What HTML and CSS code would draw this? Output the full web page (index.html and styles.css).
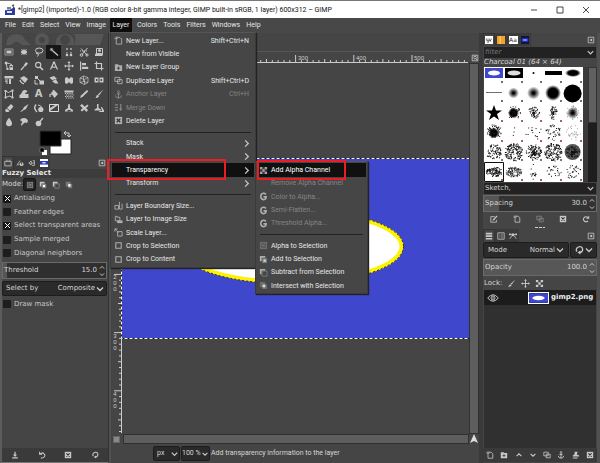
FILE: index.html
```html
<!DOCTYPE html>
<html lang="en">
<head>
<meta charset="utf-8">
<title>GIMP</title>
<link rel="stylesheet" href="styles.css">
</head>
<body>
<svg class="defs" aria-hidden="true">
  <symbol id="rect" viewBox="0 0 10 10"><path d="M1 2h8v6H1z" fill="none" stroke="#aaa" stroke-width=".8"/><path d="M2.5 3.5h5v3h-5z"/></symbol>
  <symbol id="ell" viewBox="0 0 10 10"><ellipse cx="5" cy="5" rx="3" ry="2"/><path d="M2 2.5h6M2 7.5h6" stroke="#aaa" stroke-width=".7" stroke-dasharray="1.5 .7"/></symbol>
  <symbol id="lasso" viewBox="0 0 10 10"><ellipse cx="5.2" cy="3.6" rx="3.8" ry="2.6" class="s"/><path d="M2.5 5.5Q1.5 7.5 4 6.5Q5 8 3.5 9.5" class="s"/></symbol>
  <symbol id="wand" viewBox="0 0 10 10"><path d="M3.4 3.6L9 8.6" class="s" stroke-width="1.3"/><path d="M2.5.8v3.4M.8 2.5h3.4M1.2 1.2l2.6 2.6M3.8 1.2L1.2 3.8" class="s" stroke-width=".6"/></symbol>
  <symbol id="bycolor" viewBox="0 0 10 10"><path d="M2 1h2v2H2zM6 1h2v2H6zM2 5h1.500v1.500H2zM6 5h2v1.500H6z" opacity=".6"/><circle cx="3" cy="8" r="1.300"/><circle cx="7" cy="8" r="1.300"/></symbol>
  <symbol id="scissors" viewBox="0 0 10 10"><path d="M2 1.500L8 8M8.500 1L3 7.500" class="s"/><circle cx="2.500" cy="8" r="1.300" class="s"/><circle cx="8" cy="8" r="1.100" class="s"/><path d="M1 4h7" class="s" stroke-dasharray="1 1"/></symbol>
  <symbol id="fgsel" viewBox="0 0 10 10"><path d="M2.500 1.500h6v6h-6z" class="s"/><circle cx="5.500" cy="3.500" r="1.500"/><path d="M1 9V7.500Q1 6 3 6h4q1.500 0 1.500 1.500V9z"/></symbol>
  <symbol id="path" viewBox="0 0 10 10"><path d="M2 2L3.500 8.500M2 2q4 0 6 2" class="s"/><path d="M.8.8h2.400v2.400H.8zM2.500 7h2v2h-2zM5.500 4h3.500v5H5.500z"/><path d="M6.300 5h2v1.300h-2z" fill="#454545"/></symbol>
  <symbol id="picker" viewBox="0 0 10 10"><path d="M7 1l2 1.500-2.500 3-1.700-1.300z"/><path d="M5.500 4.800L2 9" class="s" stroke-width="1.300"/></symbol>
  <symbol id="zoomt" viewBox="0 0 10 10"><circle cx="4.200" cy="4" r="2.600" class="s" stroke-width="1.100"/><path d="M6 6l3 3" class="s" stroke-width="1.700"/></symbol>
  <symbol id="measure" viewBox="0 0 10 10"><path d="M5 1L1.500 8.500M5 1l3.500 7.500M3 5.500q2 1.500 4 0" class="s" stroke-width="1.200"/><circle cx="5" cy="1.700" r="1.200"/></symbol>
  <symbol id="move" viewBox="0 0 10 10"><path d="M5 1v8M1 5h8" class="s"/><path d="M5 0l1.500 2h-3zM5 10L3.500 8h3zM0 5l2-1.500v3zM10 5L8 3.500v3z"/></symbol>
  <symbol id="align" viewBox="0 0 10 10"><path d="M1 .5h1.200v9H1zM3 2h4v2.200H3zM3 5.800h6.200V8H3z"/></symbol>
  <symbol id="crop" viewBox="0 0 10 10"><path d="M2.500.5v7h7M.5 2.500h7v7" class="s" stroke-width="1.200"/></symbol>
  <symbol id="unified" viewBox="0 0 10 10"><path d="M.5 1h9v2.500h-9zM5 4h2v5H5z"/><path d="M1 5h3M1 7l2-1v3" class="s"/></symbol>
  <symbol id="rotate" viewBox="0 0 10 10"><path d="M1 3l4-2 4 3-3 4z"/><path d="M1 5q.5 3 4 4" class="s" stroke-width="1.300"/></symbol>
  <symbol id="scale" viewBox="0 0 10 10"><path d="M1 1h3v3H1zM5.500 5.500H10V9.500H5.500z"/><path d="M3.500 3.500L6 6M1 5v4h3" class="s"/></symbol>
  <symbol id="shear" viewBox="0 0 10 10"><path d="M.5 2.500L5 1l3 3-5 1zM3 6l4-1.500 2.500 4H6z"/></symbol>
  <symbol id="flip" viewBox="0 0 10 10"><path d="M1 8V3l2-1 2 2 2-2 2 1v5l-2 1-2-2-2 2z"/></symbol>
  <symbol id="cube" viewBox="0 0 10 10"><path d="M1 3l3.500-2L9 2.500v5L5.500 9.500 1 7.500zM1 3l4.500 1.500L9 2.500M5.500 4.500v5M4.500 1v5.500L1 7.500M4.500 6.500L9 7.500" class="s" stroke-width=".7"/></symbol>
  <symbol id="flip2" viewBox="0 0 10 10"><path d="M.5 2.500h4v5h-4zM5.500 2.500h4v5h-4z"/><path d="M2 5h2M6 5h2M2.500 4v2M7.500 4v2" stroke="#454545" stroke-width=".9"/></symbol>
  <symbol id="cage" viewBox="0 0 10 10"><path d="M1.500 2l3 1.500L8.500 1.500v7L5.500 7l-4 1.500z" class="s"/><path d="M.5 1h2v2h-2zM7.500.5h2v2h-2zM.5 7.500h2v2h-2zM7.500 7.500h2v2h-2z"/></symbol>
  <symbol id="warp" viewBox="0 0 10 10"><path d="M.5 9V6q2-.5 2.500-3Q4 .5 6.500 1 9 2 8 3.500 6 2.500 6.300 5H9.500v4z"/></symbol>
  <symbol id="bucket" viewBox="0 0 10 10"><path d="M2 4l3-3 4 4-3.500 4z"/><path d="M3 5L1 5.500V8M4 1l2 3" class="s" stroke-width="1.200"/></symbol>
  <symbol id="grad" viewBox="0 0 10 10"><path d="M.5 1.500h9v2h-9z"/><path d="M1 4.500h8M2 6h8M1 7.500h8M2 9h8" class="s" stroke-dasharray="1.200 1"/></symbol>
  <symbol id="pencil" viewBox="0 0 10 10"><path d="M8 1l1.300 1.300L3.500 8 1 9l1-2.500z"/></symbol>
  <symbol id="brush" viewBox="0 0 10 10"><path d="M9.500.5L5 6.500 3.800 5.500z"/><path d="M4 6l1 1q-.5 2-4 2 1.300-.6 1.200-1.600Q2.400 6 4 6z"/></symbol>
  <symbol id="eraser" viewBox="0 0 10 10"><path d="M3 5l4-4 2.500 2.500L6 7.500zM2.500 5.500l3 2.500-1 1H2L1 7.500z"/></symbol>
  <symbol id="air" viewBox="0 0 10 10"><path d="M9.500 1L7 6 3 8l2-4zM1 9l2.500-2.500L4 8z"/></symbol>
  <symbol id="ink" viewBox="0 0 10 10"><path d="M2 1.500q-3 4 1 7.500" class="s" stroke-width="1.400"/><circle cx="6.800" cy="6.500" r="2.600"/><path d="M4 2q3 0 4 3" class="s"/></symbol>
  <symbol id="mypaint" viewBox="0 0 10 10"><path d="M.5 1.500h9v7h-9z" fill="none" stroke="#ddd"/><path d="M9 2L1 8V5l5-3z"/></symbol>
  <symbol id="stamp" viewBox="0 0 10 10"><path d="M4 1.500Q5 .5 6 1.500V5l3 2v1.500H1V7l3-2z"/><path d="M3.500 7h3v1.500h-3z" fill="#454545"/></symbol>
  <symbol id="heal" viewBox="0 0 10 10"><path d="M1 2.500L3 1l6 6-1.500 2zM8.500 1.500L9.500 3 3 8.500 1.500 7z"/></symbol>
  <symbol id="stamp2" viewBox="0 0 10 10"><path d="M3 1h1.500v4L7 6.500v1H.5v-1L3 5zM7 4h1l2 3.500v1.500H5.500L5 8h3z"/></symbol>
  <symbol id="drop" viewBox="0 0 10 10"><path d="M5 .8Q8 4.500 8 6.500 8 9.300 5 9.300T2 6.500Q2 4.500 5 .8z"/></symbol>
  <symbol id="smudge" viewBox="0 0 10 10"><path d="M1 3Q2 1 5 1t4 3L8 6 6 5.500 4 7 2.500 9 2 7l1.500-2z"/></symbol>
  <symbol id="dodge" viewBox="0 0 10 10"><circle cx="4.500" cy="6.500" r="2.800"/><path d="M5.500 5L9 1" class="s" stroke-width="1.300"/></symbol>
  <symbol id="new" viewBox="0 0 10 10"><path d="M3.500 1.500h3l2 2v5.500H2.500V4.500" class="s"/><path d="M2.500.5v4M.5 2.500h4" class="s"/></symbol>
  <symbol id="group" viewBox="0 0 10 10"><path d="M1 1.500h3.500l1 1H9V9H1z"/><path d="M5 4v3.500M3.200 5.700h3.600" stroke="#454545" stroke-width="1.100"/></symbol>
  <symbol id="dup" viewBox="0 0 10 10"><path d="M1 1.500h5.500V6H1zM4 4h5v4.500H4z" class="s"/></symbol>
  <symbol id="anchor" viewBox="0 0 10 10"><circle cx="5" cy="1.700" r="1" class="s"/><path d="M5 2.700V9M3 4.300h4M1.500 6q.5 3 3.500 3t3.500-3" class="s" stroke-width="1.100"/></symbol>
  <symbol id="merge" viewBox="0 0 10 10"><path d="M1 2h3.500M1 5h3.500M1 8h3.500M7.500 1v6" class="s" stroke-width="1.300"/><path d="M5.500 6h4l-2 3z"/></symbol>
  <symbol id="del" viewBox="0 0 10 10"><path d="M1 1h8v8H1z"/><path d="M3 3l4 4M7 3L3 7" stroke="#333" stroke-width="1.400"/></symbol>
  <symbol id="bound" viewBox="0 0 10 10"><path d="M1 5h4v4H1zM6 1v8H9V3" class="s"/></symbol>
  <symbol id="toimg" viewBox="0 0 10 10"><path d="M1.500 1.500v5h5v-4h-3v-1z" class="s"/><path d="M3.500 6h6v3h-6z"/></symbol>
  <symbol id="sc" viewBox="0 0 10 10"><path d="M4 4h5v5H4z" class="s"/><path d="M1 4V1h3M1 1l4 4" class="s"/></symbol>
  <symbol id="cr" viewBox="0 0 10 10"><path d="M2 2h6v6H2z" class="s" stroke-width="1.200"/></symbol>
  <symbol id="chk" viewBox="0 0 10 10"><path d="M1 1h8v8H1z" fill="#444"/><path d="M1 1h2.700v2.700H1zM6.300 1H9v2.700H6.300zM3.700 3.700h2.600v2.600H3.700zM1 6.300h2.700V9H1zM6.300 6.300H9V9H6.300z"/></symbol>
  <symbol id="g" viewBox="0 0 10 10"><path d="M7.700 2.700Q6.500 1.300 4.800 1.500 2 2 2 5t3 3.500Q8 8.500 8 5.400H5" class="s" stroke-width="1.700"/></symbol>
  <symbol id="rep" viewBox="0 0 10 10"><path d="M1 1h8v8H1z" fill="#777"/><path d="M3 3h4v4H3z" fill="none" stroke="#333" stroke-dasharray="1 1"/></symbol>
  <symbol id="add" viewBox="0 0 10 10"><path d="M1 1h6v2H3v4H1z"/><path d="M3.500 3.500H9V9H3.500z" fill="#888"/><path d="M5 5h2.500v2.500H5z" fill="#fff"/></symbol>
  <symbol id="sub" viewBox="0 0 10 10"><path d="M1 1h6v2H3v4H1z"/><path d="M3.500 3.500H9V9H3.500z" fill="none" stroke="#888"/></symbol>
  <symbol id="int" viewBox="0 0 10 10"><path d="M1 1h6v6H1zM3.500 3.500H9V9H3.500z" fill="#777"/><path d="M4 4h3v3H4z" fill="#fff"/></symbol>
  <symbol id="dn" viewBox="0 0 10 10"><path d="M2 3.500l3 3 3-3" class="s" stroke-width="1.400"/></symbol>
  <symbol id="up" viewBox="0 0 10 10"><path d="M2 6.500l3-3 3 3" class="s" stroke-width="1.400"/></symbol>
  <symbol id="rt" viewBox="0 0 10 10"><path d="M3.500 1.500L7 5 3.500 8.500" class="s" stroke-width="1.400"/></symbol>
  <symbol id="tabmenu" viewBox="0 0 10 10"><path d="M1.500 1.500h7v7h-7z" class="s"/><path d="M6.500 3v4L3 5z"/></symbol>
  <symbol id="save" viewBox="0 0 10 10"><path d="M5 1v5M1.500 8.500h7" class="s" stroke-width="1.500"/><path d="M2.500 4.500h5L5 7.500z"/></symbol>
  <symbol id="undo" viewBox="0 0 10 10"><path d="M2 1v3h3M2.300 4Q5 1 7.500 3.500T7 8Q5.500 9.300 3.500 8.500" class="s" stroke-width="1.300"/></symbol>
  <symbol id="reset" viewBox="0 0 10 10"><path d="M3 6.500Q1.500 5 3 3q2-2 4.500-1Q9.500 4 8 6.500q-1 1-3 1" class="s" stroke-width="1.300"/><path d="M6.500 5.500v4l-3-2z"/></symbol>
  <symbol id="refresh" viewBox="0 0 10 10"><path d="M7.500 7.500Q5 9.500 2.800 7.500T3 2.800Q5 1.300 7.500 3" class="s" stroke-width="1.300"/><path d="M9 .8v4H5z"/></symbol>
  <symbol id="edit" viewBox="0 0 10 10"><path d="M6 2H1v7h7V6" class="s"/><path d="M8.500.5l1 1L5 6.500l-2 .8.700-2z"/></symbol>
  <symbol id="tool" viewBox="0 0 10 10"><path d="M1 3h8v5.500H1zM2.500 1.500h2M6 1.500h2" class="s"/></symbol>
  <symbol id="dev" viewBox="0 0 10 10"><path d="M1 8l4-6M3 8l1-2" class="s"/><circle cx="7" cy="6.500" r="2.300"/><path d="M7 4v3" stroke="#333"/></symbol>
  <symbol id="hist" viewBox="0 0 10 10"><path d="M1 5l3-2.500v5zM4 5h4V2H6M8 5v3H5" class="s"/></symbol>
  <symbol id="layers" viewBox="0 0 10 10"><path d="M1 1h8v2H1zM1 4.200h8v2H1zM1 7.400h8v2H1z"/></symbol>
  <symbol id="chan" viewBox="0 0 10 10"><path d="M1 1h8v8H1z" class="s"/><path d="M3.500 2v6M5.500 2v6M7 2v6" class="s" stroke-width=".8" opacity=".6"/></symbol>
  <symbol id="paths" viewBox="0 0 10 10"><path d="M1 8.500Q5 0 9 8.500M1 3h8" class="s"/><path d="M3.500 2h3v3h-3zM0 2h2v2H0zM8 2h2v2H8z"/></symbol>
  <symbol id="eye" viewBox="0 0 12 10"><path d="M.7 5Q6-1.500 11.300 5 6 11.500.7 5z" class="s"/><circle cx="6" cy="5" r="2" class="s"/><circle cx="6" cy="5" r=".8"/></symbol>
  <symbol id="mask" viewBox="0 0 10 10"><path d="M3.500 1h3.500l-1 3.500 3 1V7H1V5.500l2-1zM1 8h6v1.300H1z"/></symbol>
  <symbol id="gimp" viewBox="0 0 20 10"><path d="M0 0h20v10H0z" fill="#3f48cc"/><ellipse cx="10" cy="5" rx="6.500" ry="2.400" fill="#fff"/></symbol>
</svg>

<div class="window">
  <header class="title">
    <svg class="logo" viewBox="0 0 12 12" aria-hidden="true"><path d="M1 6q2 1 3-1l1 1 4-2V2l2 2v7H1z" fill="#2d3c9e"/><path d="M3 4h4M8 2l2-1" stroke="#555" stroke-width="1.500"/><path d="M3 7h5v2H3z" fill="#dfe4ff"/></svg>
    <h1>*[gimp2] (imported)-1.0 (RGB color 8-bit gamma integer, GIMP built-in sRGB, 1 layer) 600x312 – GIMP</h1>
    <div class="wbtns">
      <button aria-label="Minimize"><svg viewBox="0 0 10 10"><path d="M2 5h6" stroke="#333" stroke-width=".9"/></svg></button>
      <button aria-label="Maximize"><svg viewBox="0 0 10 10"><path d="M2 2h6v6H2z" fill="none" stroke="#333" stroke-width=".9"/></svg></button>
      <button aria-label="Close"><svg viewBox="0 0 10 10"><path d="M2 2l6 6M8 2L2 8" stroke="#333" stroke-width=".9"/></svg></button>
    </div>
  </header>
  <nav class="menubar">
    <div class="first"><button>File</button><button>Edit</button><button>Select</button><button>View</button><button>Image</button></div>
    <div class="drop">
      <button class="open">Layer</button>
      <div class="menu main">
        <button><svg><use href="#new"/></svg><span>New Layer...</span><kbd>Shift+Ctrl+N</kbd></button>
        <button><i></i><span>New from Visible</span></button>
        <button><svg><use href="#group"/></svg><span>New Layer Group</span></button>
        <button><svg><use href="#dup"/></svg><span>Duplicate Layer</span><kbd>Shift+Ctrl+D</kbd></button>
        <button disabled><svg><use href="#anchor"/></svg><span>Anchor Layer</span><kbd>Ctrl+H</kbd></button>
        <button disabled><svg><use href="#merge"/></svg><span>Merge Down</span></button>
        <button><svg><use href="#del"/></svg><span>Delete Layer</span></button>
        <hr>
        <button><i></i><span>Stack</span><svg class="arr"><use href="#rt"/></svg></button>
        <button><i></i><span>Mask</span><svg class="arr"><use href="#rt"/></svg></button>
        <div class="sub">
          <button class="on"><i></i><span>Transparency</span><svg class="arr"><use href="#rt"/></svg></button>
          <div class="mark m1"></div>
          <div class="menu child">
            <div class="sub"><button class="on"><svg><use href="#chk"/></svg><span>Add Alpha Channel</span></button><div class="mark m2"></div></div>
            <button disabled><i></i><span>Remove Alpha Channel</span></button>
            <button disabled class="br"><svg><use href="#g"/></svg><span>Color to Alpha...</span></button>
            <button disabled class="br"><svg><use href="#g"/></svg><span>Semi-Flatten...</span></button>
            <button disabled class="br"><svg><use href="#g"/></svg><span>Threshold Alpha...</span></button>
            <hr>
            <button><svg><use href="#rep"/></svg><span>Alpha to Selection</span></button>
            <button><svg><use href="#add"/></svg><span>Add to Selection</span></button>
            <button><svg><use href="#sub"/></svg><span>Subtract from Selection</span></button>
            <button><svg><use href="#int"/></svg><span>Intersect with Selection</span></button>
          </div>
        </div>
        <button><i></i><span>Transform</span><svg class="arr"><use href="#rt"/></svg></button>
        <hr>
        <button><svg><use href="#bound"/></svg><span>Layer Boundary Size...</span></button>
        <button><svg><use href="#toimg"/></svg><span>Layer to Image Size</span></button>
        <button><svg><use href="#sc"/></svg><span>Scale Layer...</span></button>
        <button><svg><use href="#cr"/></svg><span>Crop to Selection</span></button>
        <button><svg><use href="#cr"/></svg><span>Crop to Content</span></button>
      </div>
    </div>
    <button>Colors</button><button>Tools</button><button>Filters</button><button>Windows</button><button>Help</button>
  </nav>

  <main>
    <aside class="left">
      <svg class="wilber" viewBox="0 0 104 12" aria-hidden="true"><g fill="#565656"><path d="M4 12Q5 1 14 1q7 0 9 6l6 5h-9q-6-7-11 0z"/><circle cx="40" cy="7" r="7"/><path d="M54 12q-1-11 9-11 10 0 9 11z"/><path d="M72 1h30l-4 11H72q3-6 0-11z"/></g><circle cx="40" cy="7" r="3" fill="#454545"/><circle cx="63" cy="7" r="5" fill="#454545"/></svg>
      <div class="tools" id="tools"></div>
      <svg class="swatch" viewBox="0 0 34 26" role="img" aria-label="Foreground and background colors"><path d="M11 9h21v15H11z" fill="#fff" stroke="#222"/><path d="M1 1h21v15H1z" fill="#000" stroke="#333"/><path d="M26 3h4v4M27 1l-2 2 2 2M28 5l2 2 2-2" fill="none" stroke="#ccc"/><path d="M3 20h5v5H3z" fill="#fff"/><path d="M1 18h4v4H1z" fill="#000" stroke="#999" stroke-width=".5"/></svg>
      <div class="tabs">
        <button class="cur" aria-label="Tool options"><svg><use href="#tool"/></svg></button><button aria-label="Device status"><svg><use href="#dev"/></svg></button><button aria-label="Undo history"><svg><use href="#hist"/></svg></button><button aria-label="Images"><svg viewBox="0 0 10 10"><path d="M0 0h10v10H0z" fill="#fff"/><path d="M0 2.500h10v4.500H0z" fill="#2a35c0"/><path d="M3 4h4v1.500H3z" fill="#fff"/></svg></button><button class="end" aria-label="Configure tab"><svg><use href="#tabmenu"/></svg></button>
      </div>
      <h2>Fuzzy Select</h2>
      <div class="mode"><span>Mode:</span>
        <button class="cur" aria-label="Replace"><svg><use href="#rep"/></svg></button><button aria-label="Add"><svg><use href="#add"/></svg></button><button aria-label="Subtract"><svg><use href="#sub"/></svg></button><button aria-label="Intersect"><svg><use href="#int"/></svg></button></div>
      <div class="checks five-rows">
        <label><input type="checkbox" checked>Antialiasing</label>
        <label><input type="checkbox">Feather edges</label>
        <label><input type="checkbox" checked>Select transparent areas</label>
        <label><input type="checkbox">Sample merged</label>
        <label><input type="checkbox">Diagonal neighbors</label>
      </div>
      <div class="spin thr"><label for="thr">Threshold</label><input id="thr" value="15.0"><span class="step"><svg><use href="#up"/></svg><svg><use href="#dn"/></svg></span></div>
      <div class="combo"><label for="by">Select by</label><select id="by"><option>Composite</option></select><svg><use href="#dn"/></svg></div>
      <div class="checks"><label><input type="checkbox">Draw mask</label></div>
      <footer class="bar"><button aria-label="Save"><svg><use href="#save"/></svg></button><button aria-label="Restore"><svg><use href="#undo"/></svg></button><button aria-label="Delete"><svg><use href="#del"/></svg></button><button aria-label="Reset"><svg><use href="#reset"/></svg></button></footer>
    </aside>

    <section class="view">
      <div class="gap"></div>
      <div class="stage">
        <div></div>
        <svg class="hr" id="hruler" role="img" aria-label="Horizontal ruler"></svg>
        <svg class="corner" viewBox="0 0 10 10" aria-hidden="true"><path d="M1.500 1.500h7v7h-7z" fill="none" stroke="#ccc"/><circle cx="5" cy="4.500" r="1.700" fill="none" stroke="#ccc"/><path d="M6 6l2 2" stroke="#ccc"/></svg>
        <svg class="vr" id="vruler" role="img" aria-label="Vertical ruler"></svg>
        <div class="canvas">
          <svg viewBox="0 0 349 181" role="img" aria-label="gimp2.png canvas"><path d="M0 0h349v181H0z" fill="#3f48cc"/><ellipse cx="169.500" cy="88.500" rx="111" ry="35.500" fill="#fff" stroke="#fff200" stroke-width="4"/><g fill="none"><ellipse cx="169.500" cy="88.500" rx="113" ry="37.500" stroke="#222" stroke-dasharray="2 2"/><path d="M.5.5h348v180H.5z" stroke="#111"/><path d="M.5.5h348v180H.5z" stroke="#fff" stroke-dasharray="3 2"/></g></svg>
        </div>
        <div class="vs"></div>
        <div class="qm"><b></b></div>
        <div class="hs"></div>
        <svg class="nav" viewBox="0 0 10 10" aria-hidden="true"><path d="M5 0l4 9-4-2-4 2z" fill="#ddd"/></svg>
      </div>
      <div class="status">
        <div class="combo"><select aria-label="Unit"><option>px</option></select><svg><use href="#dn"/></svg></div>
        <div class="combo pct"><input aria-label="Zoom" value="100 %"><svg><use href="#dn"/></svg></div>
        <output>Add transparency information to the layer</output>
      </div>
    </section>

    <aside class="right">
      <div class="tabs top">
        <button class="cur" aria-label="Brushes"><svg viewBox="0 0 10 10"><path d="M0 0h10v10H0z" fill="#fff"/><path d="M1 4h8M2 6h6M3 8h2M2 5l2 2 2-2 2 2" stroke="#333" fill="none" stroke-dasharray="1.500 .5"/></svg></button><button aria-label="Patterns"><svg viewBox="0 0 10 10"><path d="M0 0h10v10H0z" fill="#f5a12c"/><path d="M3 0h2v10H3z" fill="#fcc56b"/></svg></button><button class="aa" aria-label="Fonts"><span>Aa</span></button><button aria-label="History"><svg viewBox="0 0 10 10"><path d="M0 0h10v10H0z" fill="#0f1540"/><path d="M1 3h8v4H1z" fill="#2a45e0"/><path d="M3 4.500h4v1H3z" fill="#fff"/></svg></button><button class="end" aria-label="Configure tab"><svg><use href="#tabmenu"/></svg></button>
      </div>
      <div class="filter"><input aria-label="Filter" placeholder="filter"><svg><use href="#dn"/></svg></div>
      <p class="bname">Charcoal 01 (64 × 64)</p>
      <div class="brushbox"><svg id="brushes" viewBox="0 0 99 115" role="img" aria-label="Brushes"></svg><div class="track"><b></b></div></div>
      <div class="filter tag"><input aria-label="Tags" value="Sketch,"><svg><use href="#dn"/></svg></div>
      <div class="spin spc"><label for="spc">Spacing</label><input id="spc" value="30.0"><span class="step"><svg><use href="#up"/></svg><svg><use href="#dn"/></svg></span></div>
      <div class="bar five"><button aria-label="Edit"><svg><use href="#edit"/></svg></button><button aria-label="New"><svg><use href="#new"/></svg></button><button disabled aria-label="Duplicate"><svg><use href="#dup"/></svg></button><button aria-label="Delete"><svg><use href="#del"/></svg></button><button aria-label="Refresh"><svg><use href="#refresh"/></svg></button></div>
      <div class="grip"></div>
      <div class="tabs low"><button class="cur" aria-label="Layers"><svg><use href="#layers"/></svg></button><button aria-label="Channels"><svg><use href="#chan"/></svg></button><button aria-label="Paths"><svg><use href="#paths"/></svg></button><button class="end" aria-label="Configure tab"><svg><use href="#tabmenu"/></svg></button></div>
      <div class="modes">
        <div class="combo"><label for="md">Mode</label><select id="md"><option>Normal</option></select><svg><use href="#dn"/></svg></div>
        <button class="combo sw" aria-label="Switch mode group"><svg><use href="#reset"/></svg><svg><use href="#dn"/></svg></button>
      </div>
      <div class="spin opa"><label for="opa">Opacity</label><input id="opa" value="100.0"><span class="step"><svg><use href="#up"/></svg><svg><use href="#dn"/></svg></span></div>
      <div class="lock"><span>Lock:</span><button aria-label="Lock pixels"><svg><use href="#brush"/></svg></button><button aria-label="Lock position"><svg><use href="#move"/></svg></button><button aria-label="Lock alpha"><svg><use href="#chk"/></svg></button></div>
      <div class="list"><div class="layer"><svg class="eye"><use href="#eye"/></svg><svg class="thumb"><use href="#gimp"/></svg><strong>gimp2.png</strong></div></div>
      <footer class="bar eight"><button aria-label="New layer"><svg><use href="#new"/></svg></button><button aria-label="New group"><svg><use href="#group"/></svg></button><button aria-label="Raise"><svg><use href="#up"/></svg></button><button aria-label="Lower"><svg><use href="#dn"/></svg></button><button aria-label="Duplicate"><svg><use href="#dup"/></svg></button><button aria-label="Anchor"><svg><use href="#anchor"/></svg></button><button aria-label="Mask"><svg><use href="#mask"/></svg></button><button aria-label="Delete"><svg><use href="#del"/></svg></button></footer>
    </aside>
  </main>
</div>
<script src="app.js"></script>
</body>
</html>
```
FILE: app.js
```js
// Toolbox buttons, in row order.
const toolNames = ("rect ell lasso wand bycolor scissors fgsel path picker zoomt measure move align crop " +
  "unified rotate scale shear flip cube flip2 cage warp text bucket grad pencil brush " +
  "eraser air ink mypaint stamp heal stamp2 drop smudge dodge").split(" ");
document.getElementById("tools").innerHTML = toolNames.map(n =>
  `<button aria-label="${n}"${n === "wand" ? ' class="cur"' : ""}>` +
  (n === "text" ? "<b>A</b>" : `<svg><use href="#${n}"/></svg>`) + "</button>").join("");

// Rulers: one tick for every 10 image pixels at 58.2 % zoom.
const step = 5.82;
function ruler(id, from, to, origin, firstLabel, vertical) {
  let out = "";
  for (let k = -40; k < 90; k++) {
    const p = origin + k * step;
    if (p < from || p > to) continue;
    const len = k % 10 === 0 ? 8 : k % 5 === 0 ? 4 : 3;
    const r = p.toFixed(1);
    out += vertical ? `<path d="M11 ${r}h-${len}"/>` : `<path d="M${r} 11v-${len}"/>`;
    if (k % 10 === 0 && k >= firstLabel) {
      const label = String(k * 10);
      out += vertical
        ? [...label].map((c, i) => `<text x="4" y="${Math.round(p + 5 + i * 6)}">${c}</text>`).join("")
        : `<text x="${Math.round(p) + 2}" y="8">${label}</text>`;
    }
  }
  out += vertical ? `<path d="M10.500 0V${to}"/>` : `<path d="M0 10.500H${to}"/>`;
  document.getElementById(id).innerHTML = out;
}
ruler("hruler", 0, 347, 0, 30, false);
ruler("vruler", 0, 370, 95, 20, true);

// Brush grid: solid, soft and speckled brushes.
let seed = 7;
const rnd = () => (seed = (seed * 16807) % 2147483647) / 2147483647;
const cx = c => 9.8 + c * 19.7, cy = r => r === 0 ? 6 : 6.500 + r * 19.7;
function speck(c, r, n, rx, ry, size, fill) {
  let d = "";
  for (let i = 0; i < n; i++) {
    const a = rnd() * 6.283, q = fill ? Math.sqrt(rnd()) : rnd();
    d += `M${(cx(c) + Math.cos(a) * q * rx).toFixed(1)} ${(cy(r) + Math.sin(a) * q * ry).toFixed(1)}h${size}`;
  }
  return `<path d="${d}" stroke="#111" stroke-width="${size}"/>`;
}
let b = '<defs><radialGradient id="soft"><stop offset=".15"/><stop offset="1" stop-opacity="0"/></radialGradient>' +
  '<radialGradient id="firm"><stop offset=".6"/><stop offset="1" stop-opacity="0"/></radialGradient></defs>' +
  '<path d="M1 1h18v10H1z" fill="#3f48cc"/><ellipse cx="10" cy="6" rx="6" ry="2.500" fill="#fff"/>' +
  '<path d="M21 1h18v10H21z"/><ellipse cx="30" cy="6" rx="6.500" ry="2.500" fill="#ddd"/>' +
  '<circle cx="49.500" cy="6" r="1"/><path d="M61 4h17v4H61z"/><ellipse cx="89" cy="6" rx="8" ry="4" fill="url(#firm)"/>' +
  '<path d="M2 25.500h16" stroke="#333" stroke-width=".7"/>' +
  '<circle cx="29.500" cy="26" r="5.500" fill="url(#soft)"/><circle cx="49.500" cy="26" r="6.500" fill="url(#soft)"/>' +
  '<circle cx="69" cy="26" r="8" fill="url(#firm)"/><circle cx="88.600" cy="26.500" r="9"/>' +
  '<path d="M10 38l2 5.500h6l-5 3.500 2 6-5-3.500L5 53l2-6-5-3.500h6z"/>' +
  '<circle cx="29.500" cy="46" r="5.500" fill="url(#firm)"/><circle cx="88.600" cy="46" r="6" fill="url(#soft)"/>' +
  '<circle cx="9.800" cy="66" r="5.500" fill="url(#firm)"/>';
b += speck(1, 2, 60, 7, 7, 1) + speck(2, 2, 60, 6, 6, 1) + speck(3, 2, 55, 4, 7, 1) + speck(4, 2, 60, 7, 7, 0.600);
b += speck(0, 3, 90, 8, 8, 1) + speck(1, 3, 3, 7, 7, 1) + speck(2, 3, 14, 8, 8, 1, true) + speck(3, 3, 40, 8, 8, 1, true) + speck(4, 3, 30, 8, 8, 0.600, true);
b += speck(0, 4, 75, 8, 8, 1, true) + speck(1, 4, 150, 9, 9, 1, true) + speck(2, 4, 140, 8, 8, 1) + speck(3, 4, 140, 9, 9, 1, true);
b += '<circle cx="88.600" cy="85" r="8" fill="#555"/>' + speck(4, 4, 90, 7, 6, 1);
b += speck(0, 5, 110, 8, 5, 1, true) + speck(1, 5, 140, 8, 5, 0.800, true) + speck(2, 5, 16, 3, 8, 1, true) + speck(3, 5, 24, 8, 7, 1, true) + speck(4, 5, 30, 8, 7, 1, true);
for (let r = 0; r < 6; r++) for (let c = 0; c < 5; c++) {
  const x = Math.round(18 + c * 19.7), y = Math.round(14.500 + r * 19.7);
  if (y > 114) continue;
  b += `<path d="M${x - 1} ${y}h2M${x} ${y - 1}v2" stroke="${r < 2 ? "#235" : "#722"}" stroke-width=".9"/>`;
}
b += '<path d="M.5 95.500h19v19H.5z" fill="none" stroke="#111"/>';
document.getElementById("brushes").innerHTML = b;
```
FILE: styles.css
```css
* { box-sizing: border-box; }
html, body { height: 100%; margin: 0; }
body { font: 7px/9px "DejaVu Sans", sans-serif; color: #d6d6d6; background: #454545; overflow: hidden; }
button, input, select { font: inherit; color: inherit; background: none; border: 0; padding: 0; margin: 0; appearance: none; outline: 0; min-width: 0; }
h1, h2, p { margin: 0; font-size: inherit; font-weight: inherit; }
svg { display: block; width: 10px; height: 10px; fill: #c8c8c8; flex: none; }
.s { fill: none; stroke: #c8c8c8; }
.defs { position: absolute; width: 0; height: 0; }
button { display: flex; align-items: center; justify-content: center; }

.window { display: flex; flex-direction: column; height: 100vh; }
.title { display: flex; align-items: center; height: 18px; background: #fff; color: #111; border-top: 1px solid #777; padding-left: 4px; font: 7px/12px Roboto, sans-serif; }
.title h1 { flex: 1; padding-left: 2px; font: inherit; white-space: nowrap; }
.logo { width: 12px; height: 12px; }
.wbtns { display: flex; gap: 16px; padding-right: 9px; }
.menubar { display: flex; height: 15px; background: #484848; color: #e6e6e6; font: 7px/14px Roboto, sans-serif; }
.first { display: flex; justify-content: space-between; width: 110px; padding: 0 1px 0 2px; }
.menubar > button, .first button, .open { height: 14px; padding: 0 3px; }
.drop { position: relative; margin-right: 2px; }
.open { background: #0d0d0d; width: 22px; }

.menu { position: absolute; z-index: 2; display: flex; flex-direction: column; background: #464646; padding: 1px; box-shadow: 1px 1px 1px #222; border: 1px solid #3a3a3a; border-top-color: #565656; }
.main { left: 0; top: 14px; width: 146px; height: 236px; }
.child { left: 143px; top: -2px; width: 113px; height: 133px; z-index: 3; }
.menu button { flex: 1; width: 100%; justify-content: flex-start; gap: 3px; padding: 0 5px 0 2px; font: 7px/12px Roboto, sans-serif; white-space: nowrap; }
.menu i { width: 9px; }
.menu svg { width: 9px; height: 9px; opacity: .8; }
.menu span { flex: 1; text-align: left; }
.menu kbd { font: inherit; }
.menu .arr { opacity: 1; margin-right: -2px; }
.menu button:disabled { color: #858585; }
.menu button:disabled svg { opacity: .5; }
.menu .br:disabled svg { opacity: .8; }
.menu hr { width: calc(100% - 6px); height: 1px; margin: 4px 3px; border: 0; background: #222; }
.menu .on { background: #101010; color: #fff; height: 100%; }
.sub { position: relative; flex: 1; }
.mark { position: absolute; z-index: 5; border: 2px solid #ed1c24; }
.m1 { left: -5px; top: -4px; width: 119px; height: 21px; }
.m2 { left: 0; top: -3px; width: 89px; height: 20px; }

main { display: flex; flex: 1; min-height: 0; }
.left { display: flex; flex-direction: column; width: 109px; border-left: 2px solid #5c5c5c; border-right: 1px solid #333; border-bottom: 1px solid #777; }
.wilber { width: 104px; height: 12px; }
.tools { display: grid; grid-template-columns: repeat(7, 15px); grid-auto-rows: 14px; margin-left: -1px; }
.tools .cur { background: #161616; border-radius: 1px; }
.tools b { font: bold 10px/10px "DejaVu Sans", sans-serif; color: #c8c8c8; }
.swatch { width: 34px; height: 26px; margin: 1px 0 0 37px; }
.tabs { display: flex; height: 13px; padding-right: 2px; }
.tabs button { width: 12px; background: #3b3b3b; }
.tabs .cur { background: #454545; border: 1px solid #333; border-bottom: 0; }
.tabs svg { width: 8px; height: 8px; }
.tabs .end { margin-left: auto; background: none; width: 8px; }
.left h2 { font-weight: bold; line-height: 9px; background: #3c3c3c; color: #e8e8e8; }
.mode { display: flex; align-items: center; height: 13px; }
.mode span { width: 21px; }
.mode button { width: 13px; height: 13px; }
.mode .cur { background: #222; border: 1px solid #161616; border-radius: 2px; }
.mode svg { width: 8px; height: 8px; }
.checks { display: grid; grid-auto-rows: minmax(14px, auto); padding-left: 1px; margin-top: 1px; }
.five-rows { height: 68px; grid-template-rows: repeat(5, 1fr); }
.checks label { display: flex; align-items: center; gap: 3px; white-space: nowrap; color: #c6c6c6; }
.checks input { width: 8px; height: 8px; background: #1d1d1d; border-radius: 1px; flex: none; }
.checks input:checked { background: linear-gradient(45deg, transparent 40%, #fff 42% 58%, transparent 60%) center / 5px 5px no-repeat, linear-gradient(-45deg, transparent 40%, #fff 42% 58%, transparent 60%) center / 5px 5px no-repeat, #151515; }
.spin { display: flex; align-items: center; height: 17px; border: 1px solid #6a6a6a; padding-left: 1px; background: linear-gradient(90deg, #555 4px, #2f2f2f 4px); }
.spin input { flex: 1; width: 20px; text-align: right; }
.step { display: grid; margin-left: 1px; }
.step svg { width: 8px; height: 7px; }
.thr { margin: 2px 1px 0 0; }
.combo { display: flex; align-items: center; height: 15px; background: #2a2a2a; border: 1px solid #1c1c1c; border-radius: 2px; padding: 0 3px; }
.combo select { flex: 1; text-align: right; }
.left .combo { margin: 2px 1px 0 0; padding-right: 1px; }
.bar { display: flex; justify-content: space-around; align-items: center; height: 14px; background: #3a3a3a; }
.bar svg { width: 8px; height: 8px; }
.bar button:disabled { opacity: .5; }
.left .bar { margin-top: auto; }

.view { flex: 1; display: flex; flex-direction: column; min-width: 0; border-left: 2px solid #505050; }
.gap { height: 19px; border-bottom: 1px solid #565656; }
.stage { flex: 1; display: grid; grid-template: 11px minmax(0, 1fr) 10px / 10px minmax(0, 1fr) 10px; min-height: 0; }
.hr, .vr { width: 100%; height: 100%; overflow: visible; stroke: #ccc; stroke-width: 1; }
.hr text, .vr text { font: 6px/6px "Liberation Sans", sans-serif; fill: #ccc; stroke: none; }
.vr text { text-anchor: middle; }
.corner { width: 8px; height: 8px; margin: 2px; }
.canvas { display: flex; align-items: center; justify-content: center; overflow: hidden; }
.canvas svg { width: 349px; height: 181px; }
.vs { background: #5e5e5e; border: 1px solid #303030; }
.hs { background: #5e5e5e; border: 1px solid #303030; margin-left: 2px; }
.qm { display: grid; place-items: center; }
.qm b { width: 7px; height: 7px; background: #888; border: 1px solid #666; }
.status { display: flex; align-items: center; height: 19px; padding: 0 0 0 42px; gap: 1px; font-family: Roboto, sans-serif; }
.status .combo { width: 27px; padding: 0 0 0 3px; }
.status select { text-align: left; }
.status .pct { width: 29px; padding-left: 0; }
.status .pct input { flex: 1; width: 19px; }
.status output { white-space: nowrap; }
.status .combo svg { width: 9px; }
.status .pct svg { width: 8px; }

.right { display: flex; flex-direction: column; width: 121px; border-left: 4px solid #3a3a3a; border-right: 3px solid #505050; padding-bottom: 1px; }
.right .tabs button { width: 12px; }
.right .tabs .end { width: 8px; }
.aa span { background: #fff; color: #222; width: 9px; height: 8px; line-height: 8px; font-size: 6px; }
.filter { display: flex; align-items: center; height: 11px; margin: 1px 1px 0; background: #222; padding: 0 1px; }
.filter input { flex: 1; }
.filter input::placeholder { color: #777; font-style: italic; }
.filter svg { width: 9px; height: 9px; }
.bname { font-style: italic; line-height: 9px; padding-left: 1px; white-space: nowrap; }
.brushbox { display: flex; justify-content: space-between; margin-left: 1px; background: #3a3a3a; }
#brushes { width: 99px; height: 115px; background: #fff; fill: #000; }
.track { width: 9px; background: #1e1e1e; }
.track b { display: block; height: 56px; background: #606060; border: 1px solid #333; }
.spc { background: linear-gradient(90deg, #555 15px, #333 15px); margin-top: 1px; }
.opa { background: #575757; margin-top: 1px; }
.five { height: 14px; background: none; }
.grip { width: 10px; height: 1px; margin: 1px auto; background: repeating-linear-gradient(90deg, #ccc 0 3px, #555 3px 4px); }
.modes { display: flex; gap: 1px; }
.modes .combo { height: 16px; }
.modes .combo:first-child { flex: 1; padding-left: 4px; }
.modes .sw { width: 27px; }
.lock { display: flex; align-items: center; height: 14px; gap: 5px; padding-left: 1px; }
.lock svg { width: 9px; height: 9px; }
.list { flex: 1; background: #303030; margin: 0 1px; }
.layer { display: flex; align-items: center; height: 15px; background: #1c1c1c; padding-left: 3px; }
.layer .eye { width: 12px; height: 10px; }
.layer .thumb { width: 21px; height: 12px; border: 1px solid #fff; margin: 0 2px 0 29px; }
.layer strong { color: #eee; }
```
